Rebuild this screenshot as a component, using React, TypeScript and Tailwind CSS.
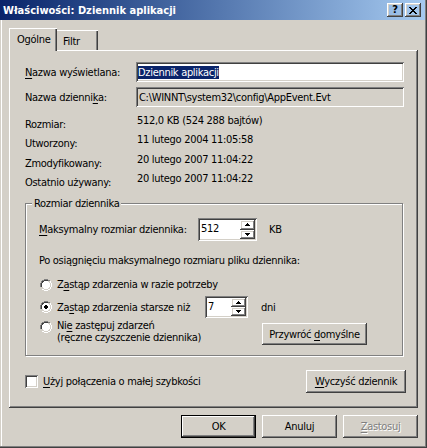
import React from "react";

const raised =
  "shadow-[inset_-1px_-1px_#404040,inset_1px_1px_#ffffff,inset_-2px_-2px_#808080,inset_2px_2px_#d4d0c8]";
const sunken =
  "shadow-[inset_1px_1px_#808080,inset_-1px_-1px_#ffffff,inset_2px_2px_#404040,inset_-2px_-2px_#d4d0c8]";

function U({ children }: { children: React.ReactNode }) {
  return <span className="underline underline-offset-[2px] decoration-1">{children}</span>;
}

function Btn({
  children,
  className = "",
  def = false,
}: {
  children: React.ReactNode;
  className?: string;
  def?: boolean;
}) {
  if (def) {
    return (
      <div className={`border border-black flex ${className}`}>
        <div className={`flex-1 flex items-center justify-center ${raised}`}>{children}</div>
      </div>
    );
  }
  return <div className={`flex items-center justify-center ${raised} ${className}`}>{children}</div>;
}

function Arrow({ up }: { up: boolean }) {
  return (
    <svg width="5" height="3" viewBox="0 0 5 3" className="block">
      {up ? (
        <path d="M2 0h1v1h1v1h1v1H0V2h1V1h1z" fill="#000" />
      ) : (
        <path d="M0 0h5v1H4v1H3v1H2V2H1V1H0z" fill="#000" />
      )}
    </svg>
  );
}

function Spinner({ value, className = "" }: { value: string; className?: string }) {
  return (
    <div className={`bg-white flex p-[2px] ${sunken} ${className}`}>
      <div className="flex-1 pl-[1px] pt-[2px] leading-[13px]">{value}</div>
      <div className="w-[15px] flex flex-col">
        <div className={`flex-1 flex items-center justify-center ${raised}`}>
          <Arrow up />
        </div>
        <div className={`flex-1 flex items-center justify-center ${raised}`}>
          <Arrow up={false} />
        </div>
      </div>
    </div>
  );
}

function Radio({ checked = false }: { checked?: boolean }) {
  return (
    <svg width="12" height="12" viewBox="0 0 12 12" className="block shrink-0">
      <path d="M4 0h4v1h2v1H8V1H4v1H2v2H1v4H0V4h1V2h1V1h2z" fill="#808080" />
      <path d="M10 2h1v2h1v4h-1v2h-1v1H8v1H4v-1H2v-1h2v1h4v-1h2V8h1V4h-1z" fill="#ffffff" />
      <path d="M4 1h4v1H4v1H3v1H2v4H1V4h1V2h2z" fill="#404040" />
      <path d="M9 3h1v1h0v4H9v1H8v1H4V9h4V8h1V4z" fill="#d4d0c8" />
      <path d="M4 2h4v1h1v1h1v4H9v1H8v1H4V9H3V8H2V4h1V3h1z" fill="#ffffff" />
      {checked && <path d="M5 4h2v1h1v2H7v1H5V7H4V5h1z" fill="#000" />}
    </svg>
  );
}

export default function App() {
  return (
    <div className="w-[427px] h-[448px] bg-[#d4d0c8] flex flex-col text-[11px] leading-[13px] tracking-[-0.3px] text-black font-['DejaVu_Sans_Condensed','DejaVu_Sans',sans-serif] [font-stretch:condensed] shadow-[inset_-1px_-1px_#404040,inset_-2px_-2px_#808080,inset_1px_0_#d4d0c8,inset_2px_0_#ffffff]">
      {/* Title bar */}
      <div className="h-[20px] mr-[2px] bg-linear-to-r from-[#0a246a] to-[#a6caf0] flex items-center pl-[3px] pr-[4px] tracking-normal">
        <span className="text-white font-bold">Właściwości: Dziennik aplikacji</span>
        <div className="ml-auto flex gap-[2px]">
          <div className={`w-[16px] h-[14px] flex items-center justify-center font-bold ${raised}`}>
            <span className="-mt-[1px]">?</span>
          </div>
          <div className={`w-[16px] h-[14px] flex items-center justify-center ${raised}`}>
            <svg width="8" height="7" viewBox="0 0 8 7" className="block">
              <path
                d="M0 0h2v1h1v1h2V1h1V0h2v1H7v1H6v1H5v1h1v1h1v1h1v1H6V6H5V5H3v1H2v1H0V6h1V5h1V4h1V3H2V2H1V1H0z"
                fill="#000"
              />
            </svg>
          </div>
        </div>
      </div>

      {/* Body */}
      <div className="flex-1 flex flex-col pl-[9px] pr-[9px]">
        {/* Tabs */}
        <div className="mt-[8px] h-[22px] flex items-end">
          <div className="relative z-10 w-[48px] h-[23px] -mb-[1px] bg-[#d4d0c8] pl-[8px] pt-[5px] shadow-[inset_1px_0_#ffffff,inset_0_1px_#ffffff,inset_-1px_0_#404040,inset_-2px_0_#808080]">
            Ogólne
          </div>
          <div className="w-[41px] h-[20px] pl-[6px] pt-[5px] shadow-[inset_0_1px_#ffffff,inset_-1px_0_#404040,inset_-2px_0_#808080]">
            Filtr
          </div>
        </div>

        {/* Panel */}
        <div className="h-[358px] flex flex-col pl-[16px] pr-[12px] pt-[12px] shadow-[inset_-1px_-1px_#404040,inset_1px_1px_#ffffff,inset_-2px_-2px_#808080]">
          <div className="flex items-center h-[20px]">
            <div className="w-[111px]">
              <U>N</U>azwa wyświetlana:
            </div>
            <div className={`w-[268px] h-[20px] bg-white pl-[2px] flex items-center ${sunken}`}>
              <span className="bg-[#0a246a] text-white">Dziennik aplikacji</span>
            </div>
          </div>
          <div className="flex items-center h-[20px] mt-[5px]">
            <div className="w-[111px]">
              Nazwa dzienni<U>k</U>a:
            </div>
            <div className={`w-[268px] h-[20px] pl-[3px] flex items-center ${sunken}`}>
              C:\WINNT\system32\config\AppEvent.Evt
            </div>
          </div>

          <div className="mt-[7px] flex flex-col">
            {[
              ["Rozmiar:", "512,0 KB (524 288 bajtów)", "h-[19px]"],
              ["Utworzony:", "11 lutego 2004 11:05:58", "h-[20px]"],
              ["Zmodyfikowany:", "20 lutego 2007 11:04:22", "h-[19px]"],
              ["Ostatnio używany:", "20 lutego 2007 11:04:22", "h-[20px]"],
            ].map(([l, v, h]) => (
              <div key={l} className={`flex ${h}`}>
                <div className="w-[112px] pt-[4px]">{l}</div>
                <div>{v}</div>
              </div>
            ))}
          </div>

          {/* Group box */}
          <div className="relative mt-[11px] w-[378px] h-[153px] border border-[#808080] shadow-[1px_1px_0_#ffffff,inset_1px_1px_0_#ffffff] pl-[13px] flex flex-col">
            <div className="absolute -top-[7px] left-[6px] px-[2px] bg-[#d4d0c8]">Rozmiar dziennika</div>
            <div className="mt-[14px] flex items-center h-[23px]">
              <div className="w-[159px]">
                <U>M</U>aksymalny rozmiar dziennika:
              </div>
              <Spinner value="512" className="w-[59px] h-[23px]" />
              <div className="ml-[12px]">KB</div>
            </div>
            <div className="mt-[13px]">Po osiągnięciu maksymalnego rozmiaru pliku dziennika:</div>
            <div className="mt-[11px] flex items-center h-[13px] pl-[1px] gap-[5px]">
              <Radio />
              <div>
                Z<U>a</U>stąp zdarzenia w razie potrzeby
              </div>
            </div>
            <div className="mt-[5px] flex items-center h-[22px] pl-[1px]">
              <Radio checked />
              <div className="ml-[5px] w-[148px]">
                Za<U>s</U>tąp zdarzenia starsze niż
              </div>
              <Spinner value="7" className="w-[43px] h-[22px]" />
              <div className="ml-[13px]">dni</div>
            </div>
            <div className="mt-[2px] flex items-start pl-[1px]">
              <div className="mt-[1px]">
                <Radio />
              </div>
              <div className="ml-[5px] w-[205px] leading-[12px]">
                Ni<U>e</U> zastępuj zdarzeń
                <br />
                (ręczne czyszczenie dziennika)
              </div>
              <Btn className="mt-[3px] w-[105px] h-[22px]">
                <span>
                  Przywróć <U>d</U>omyślne
                </span>
              </Btn>
            </div>
          </div>

          <div className="mt-[14px] flex items-center h-[23px]">
            <div className={`w-[13px] h-[13px] bg-white ${sunken}`} />
            <div className="ml-[5px]">
              <U>U</U>żyj połączenia o małej szybkości
            </div>
            <Btn className="ml-auto w-[100px] h-[23px]">
              <span>
                <U>W</U>yczyść dziennik
              </span>
            </Btn>
          </div>
        </div>

        {/* Dialog buttons */}
        <div className="mt-[7px] flex justify-end gap-[6px]">
          <Btn def className="w-[75px] h-[23px]">
            OK
          </Btn>
          <Btn className="w-[75px] h-[23px]">Anuluj</Btn>
          <Btn className="w-[75px] h-[23px]">
            <span className="text-[#808080] [text-shadow:1px_1px_0_#ffffff]">
              <U>Z</U>astosuj
            </span>
          </Btn>
        </div>
      </div>
    </div>
  );
}
